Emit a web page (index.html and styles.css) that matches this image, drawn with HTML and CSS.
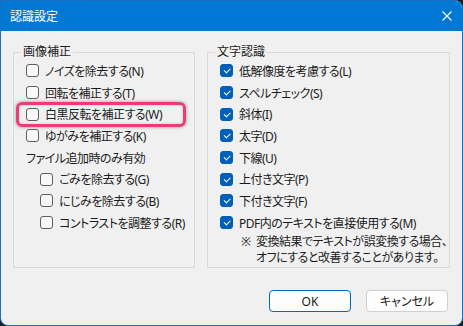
FILE: index.html
```html
<!DOCTYPE html>
<html lang="ja">
<head>
    <meta charset="UTF-8">
    <title>認識設定</title>
    <link rel="stylesheet" href="styles.css">
</head>
<body>

    <div class="dialog">
        <!-- Title bar -->
        <div class="titlebar">
            <span class="title">認識設定</span>
            <svg class="close" width="10" height="10" viewBox="0 0 10 10">
                <path d="M0.5 0.5 L9.5 9.5 M9.5 0.5 L0.5 9.5" stroke="#fff" stroke-width="1.1" fill="none"/>
            </svg>
        </div>

        <div class="dialog-body">
            <div class="groups">
                <fieldset class="group group-left">
                    <legend>画像補正</legend>
                    <label class="option"><span class="box"></span>ノイズを除去する(N)</label>
                    <label class="option"><span class="box"></span>回転を補正する(T)</label>
                    <label class="option"><span class="box"></span>白黒反転を補正する(W)<span class="mark"></span></label>
                    <label class="option"><span class="box"></span>ゆがみを補正する(K)</label>
                    <div class="heading">ファイル追加時のみ有効</div>
                    <div class="sub">
                        <label class="option"><span class="box"></span>ごみを除去する(G)</label>
                        <label class="option"><span class="box"></span>にじみを除去する(B)</label>
                        <label class="option"><span class="box"></span>コントラストを調整する(R)</label>
                    </div>
                </fieldset>

                <fieldset class="group group-right">
                    <legend>文字認識</legend>
                    <label class="option"><span class="box checked"></span>低解像度を考慮する(L)</label>
                    <label class="option"><span class="box checked"></span>スペルチェック(S)</label>
                    <label class="option"><span class="box checked"></span>斜体(I)</label>
                    <label class="option"><span class="box checked"></span>太字(D)</label>
                    <label class="option"><span class="box checked"></span>下線(U)</label>
                    <label class="option"><span class="box checked"></span>上付き文字(P)</label>
                    <label class="option"><span class="box checked"></span>下付き文字(F)</label>
                    <label class="option"><span class="box checked"></span>PDF内のテキストを直接使用する(M)</label>
                    <div class="note">
                        <span class="note-mark">※</span>
                        <span>変換結果でテキストが誤変換する場合、<br>オフにすると改善することがあります。</span>
                    </div>
                </fieldset>
            </div>

            <div class="actions">
                <button class="btn primary">OK</button>
                <button class="btn">キャンセル</button>
            </div>
        </div>
    </div>

</body>
</html>
```

FILE: styles.css
```css
/* Page */
body {
    margin: 0;
    background: #202020;
    font-family: "Noto Sans", "Noto Sans CJK JP", sans-serif;
    font-size: 12px;
    color: #1b1b1b;
    font-feature-settings: "palt";
}

/* Window frame */
.dialog {
    width: 463px;
    height: 326px;
    box-sizing: border-box;
    border: 1px solid #1a6fc2;
    border-radius: 0 8px 8px 8px;
    background: #f0f0f0;
    overflow: hidden;
    display: flex;
    flex-direction: column;
}

.titlebar {
    height: 30px;
    flex: none;
    background: #0078d4;
    color: #ffffff;
    display: flex;
    align-items: center;
    justify-content: space-between;
    padding: 0 10px 0 9px;
}

.title {
    font-size: 12px;
}

.dialog-body {
    flex: 1;
    padding: 13px 12px 0 12px;
    display: flex;
    flex-direction: column;
}

/* Group boxes */
.groups {
    display: flex;
    gap: 12px;
    height: 224px;
}

.group {
    margin: 0;
    padding: 0 8px 0 12px;
    border: 1px solid #dadada;
    min-width: 0;
    box-sizing: border-box;
}

.group-left {
    width: 182px;
    flex: none;
}

.group-right {
    flex: 1;
}

.group legend {
    padding: 0 2px;
    margin-left: -5px;
    line-height: 16px;
}

/* Checkbox rows */
.option {
    position: relative;
    display: flex;
    align-items: center;
    gap: 6px;
    height: 21.7px;
    white-space: nowrap;
    letter-spacing: -0.5px;
}

.box {
    position: relative;
    flex: none;
    width: 13px;
    height: 13px;
    box-sizing: border-box;
    border: 1px solid #5f5f5f;
    border-radius: 3px;
    background: #f8f8f8;
}

.box.checked {
    border-color: #005fb8;
    background: #005fb8;
}

.box.checked::after {
    content: "";
    position: absolute;
    left: 3px;
    top: 3px;
    width: 5px;
    height: 2.5px;
    border-left: 1px solid #ffffff;
    border-bottom: 1px solid #ffffff;
    transform: rotate(-45deg);
}

.heading {
    height: 21.7px;
    display: flex;
    align-items: center;
    letter-spacing: -0.5px;
}

.sub {
    padding-left: 14px;
}

.note {
    display: flex;
    margin-left: 21px;
    line-height: 16px;
    white-space: nowrap;
    letter-spacing: -0.5px;
}

.note-mark {
    width: 15px;
    flex: none;
}

/* Annotation highlight */
.mark {
    position: absolute;
    left: -10px;
    top: -1px;
    width: 170px;
    height: 25px;
    box-sizing: border-box;
    border: 3px solid #e93d77;
    border-radius: 6px;
    box-shadow: 0 0 3px 1px rgba(0,0,0,0.22), inset 0 0 3px rgba(0,0,0,0.18);
    pointer-events: none;
}

/* Buttons */
.actions {
    display: flex;
    justify-content: flex-end;
    gap: 15px;
    margin-top: 22px;
    padding-right: 2px;
}

.btn {
    width: 82px;
    height: 22px;
    padding: 0;
    font: inherit;
    color: #1b1b1b;
    background: #fdfdfd;
    border: 1px solid #d0d0d0;
    border-radius: 4px;
}

.btn.primary {
    border-color: #0067c0;
}
```
